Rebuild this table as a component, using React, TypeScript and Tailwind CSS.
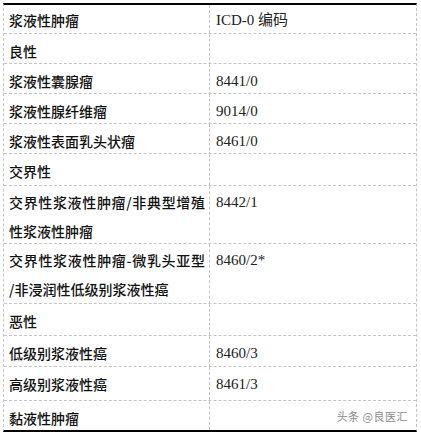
import React from "react";

type Row = {
  name: string[];
  code?: string;
  h: string;
  pt?: string;
};

const rows: Row[] = [
  { name: ["良性"], h: "h-[30px]" },
  { name: ["浆液性囊腺瘤"], code: "8441/0", h: "h-[30px]" },
  { name: ["浆液性腺纤维瘤"], code: "9014/0", h: "h-[30px]" },
  { name: ["浆液性表面乳头状瘤"], code: "8461/0", h: "h-[30px]" },
  { name: ["交界性"], h: "h-[32px]" },
  { name: ["交界性浆液性肿瘤/非典型增殖", "性浆液性肿瘤"], code: "8442/1", h: "h-[58px]" },
  { name: ["交界性浆液性肿瘤-微乳头亚型", "/非浸润性低级别浆液性癌"], code: "8460/2*", h: "h-[60px]" },
  { name: ["恶性"], h: "h-[32px]" },
  { name: ["低级别浆液性癌"], code: "8460/3", h: "h-[31px]" },
  { name: ["高级别浆液性癌"], code: "8461/3", h: "h-[34px]", pt: "pt-[0px]" },
];

const cjk = "font-['Noto_Sans_CJK_SC',sans-serif]";
const serif = "font-['Liberation_Serif','Noto_Sans_CJK_SC',serif]";
const line = "border-[#c4c4c4] border-dashed";

const TableRow: React.FC<{ row: Row }> = ({ row }) => {
  const twoLines = row.name.length > 1;
  const pad = row.pt ?? "pt-[3px]";
  return (
    <div className={`grid grid-cols-[206px_207px] border-b ${line} ${row.h}`}>
      <div
        className={`flex flex-col border-r ${line} pl-[5px] pr-[4px] ${
          twoLines ? "justify-start pt-[2px]" : `justify-center ${pad}`
        }`}
      >
        {row.name.map((text, i) => (
          <span
            key={i}
            className={`block ${twoLines ? "leading-[29px]" : "leading-[28px]"} ${
              twoLines && i === 0 ? "[text-align-last:justify]" : ""
            }`}
          >
            {text}
          </span>
        ))}
      </div>
      <div
        className={`flex pl-[6px] ${serif} text-[15px] font-normal text-[#222] ${
          twoLines ? "items-start pt-[2px] leading-[29px]" : `items-center ${pad} leading-[28px]`
        }`}
      >
        {row.code}
      </div>
    </div>
  );
};

const App: React.FC = () => {
  return (
    <div className={`h-[436px] w-[421px] bg-white pl-[3px] pt-[3px] text-[14px] font-medium text-[#111] ${cjk}`}>
      <div className="w-[414px] border-x border-t-2 border-b-2 border-x-[#c4c4c4] border-t-black border-b-black [border-left-style:dashed] [border-right-style:dashed]">
        <div className={`grid h-[29px] grid-cols-[206px_207px] border-b ${line}`}>
          <div className={`flex items-center border-r ${line} pl-[5px] pt-[3px]`}>
            浆液性肿瘤
          </div>
          <div className={`flex items-center pl-[6px] pt-[3px] text-[15px] font-normal text-[#222] ${serif}`}>
            ICD-0 编码
          </div>
        </div>

        {rows.map((row, i) => (
          <TableRow key={i} row={row} />
        ))}

        <div className="relative grid h-[29px] grid-cols-[206px_207px]">
          <div className={`flex items-center border-r ${line} pl-[5px] pt-[6px]`}>
            黏液性肿瘤
          </div>
          <div />
          <span className="absolute right-[8px] top-[7px] text-[11px] font-normal tracking-[0.5px] text-[#8c8c8c]">
            头条 @良医汇
          </span>
        </div>
      </div>
    </div>
  );
};

export default App;
